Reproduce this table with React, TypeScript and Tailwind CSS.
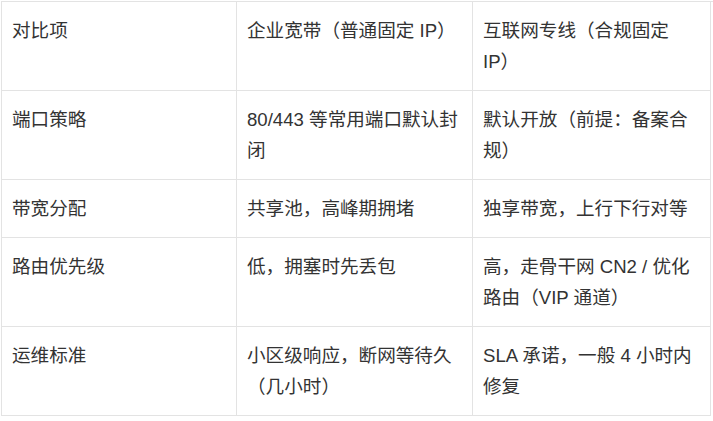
import React from "react";

const rows: string[][] = [
  ["对比项", "企业宽带（普通固定 IP）", "互联网专线（合规固定 IP）"],
  ["端口策略", "80/443 等常用端口默认封闭", "默认开放（前提：备案合规）"],
  ["带宽分配", "共享池，高峰期拥堵", "独享带宽，上行下行对等"],
  ["路由优先级", "低，拥塞时先丢包", "高，走骨干网 CN2 / 优化路由（VIP 通道）"],
  ["运维标准", "小区级响应，断网等待久（几小时）", "SLA 承诺，一般 4 小时内修复"],
];

export default function App() {
  return (
    <div className="w-[713px] h-[421px] bg-white pl-px pt-px">
      <div
        className="grid grid-cols-[235px_236px_238px] border-l border-t border-[#e3e3e3] text-[18.6px] leading-[31px] text-[#333]"
        style={{ fontFamily: '"Liberation Sans", "Noto Sans CJK SC", sans-serif' }}
      >
        {rows.map((r, i) =>
          r.map((c, j) => (
            <div
              key={`${i}-${j}`}
              className="border-r border-b border-[#e3e3e3] pl-[10px] pr-[10px] pt-[13px] pb-[13px] break-words"
            >
              {c}
            </div>
          ))
        )}
      </div>
    </div>
  );
}
